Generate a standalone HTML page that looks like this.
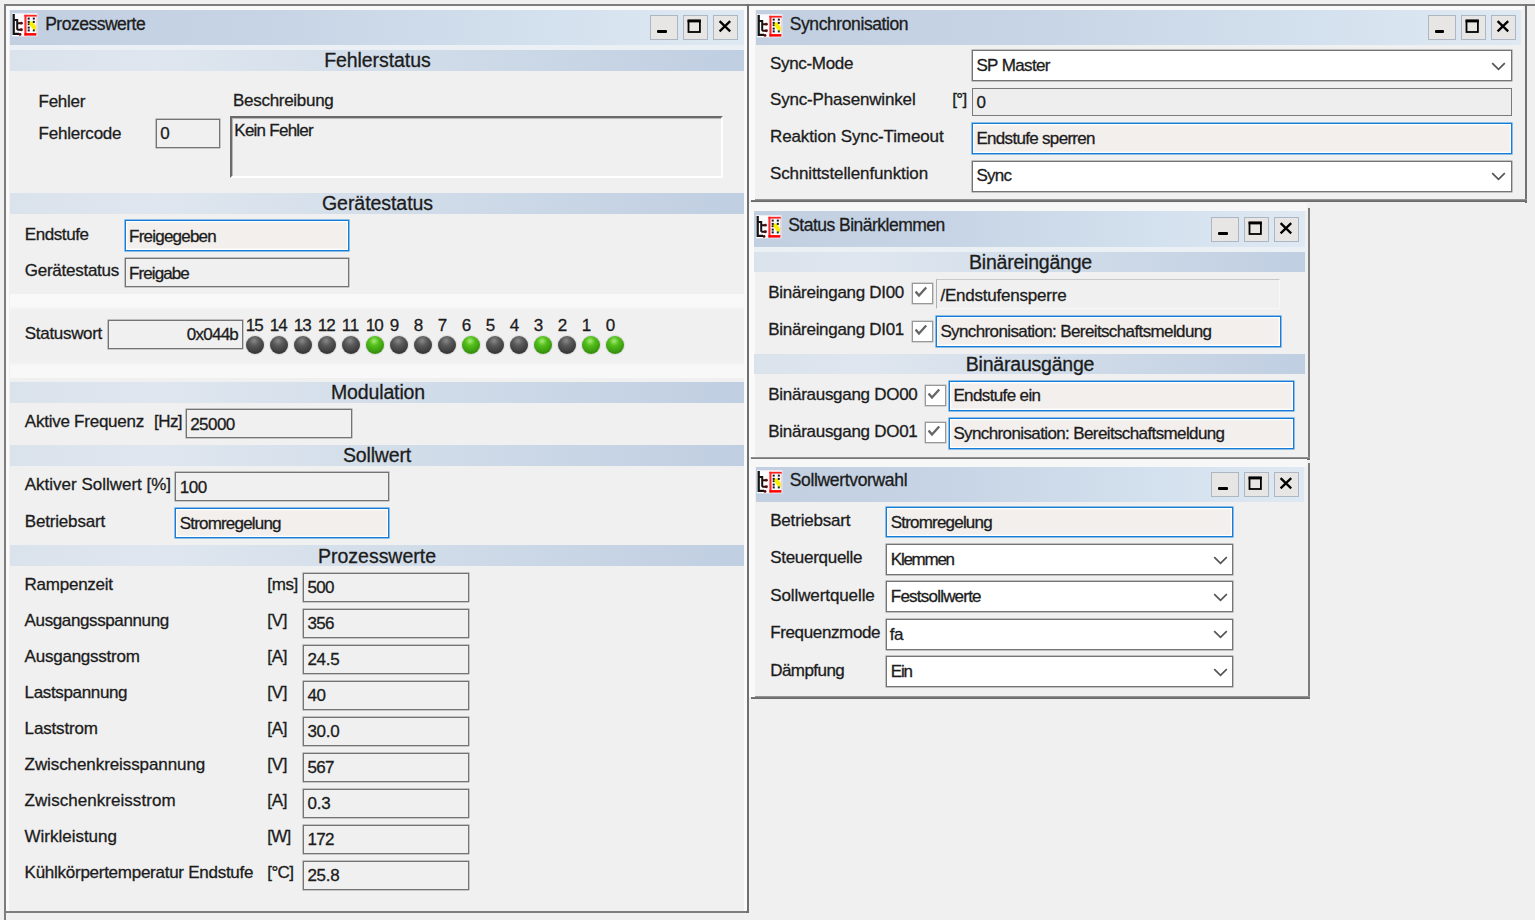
<!DOCTYPE html>
<html lang="de"><head><meta charset="utf-8"><title>Prozesswerte</title>
<style>
html,body{margin:0;padding:0}
body{width:1535px;height:920px;overflow:hidden;background:#f0f0f0;position:relative;font-family:"Liberation Sans",sans-serif;color:#1c1c1c}
body>div,body>span,body>svg{position:absolute}
.t{white-space:nowrap;display:block;-webkit-text-stroke:.3px #1c1c1c}
.ic{display:block}
</style></head><body>
<div style="left:4px;top:4px;width:1531px;height:2.2px;background:#7d7d7d"></div>
<div style="left:3.7px;top:4px;width:2.8px;height:916px;background:#7d7d7d"></div>
<div style="left:4px;top:910.7px;width:745px;height:2.8px;background:#7d7d7d"></div>
<div style="left:746.2px;top:4px;width:2.8px;height:909px;background:#707070"></div>
<div style="left:1524.8px;top:4px;width:2.2px;height:198.5px;background:#737373"></div>
<div style="left:751px;top:199.2px;width:775.8px;height:3.3px;background:linear-gradient(180deg,#a2a2a2,#777 45%,#666)"></div>
<div style="left:1307.8px;top:208.4px;width:2.3px;height:251px;background:#7d7d7d"></div>
<div style="left:751px;top:456.5px;width:559.2px;height:3.3px;background:linear-gradient(180deg,#a2a2a2,#777 45%,#666)"></div>
<div style="left:1307.8px;top:463px;width:2.3px;height:236px;background:#7d7d7d"></div>
<div style="left:751px;top:695.6px;width:559.2px;height:3.2px;background:linear-gradient(180deg,#a2a2a2,#777 45%,#666)"></div>
<div style="left:6.2px;top:6.2px;width:3px;height:905px;background:#fafafa"></div>
<div style="left:6.2px;top:6.2px;width:740px;height:3.5px;background:#fafafa"></div>
<div style="left:743.6px;top:6.2px;width:3.2px;height:905px;background:#fafafa"></div>
<div style="left:749px;top:6.2px;width:6px;height:194px;background:#fafafa"></div>
<div style="left:749px;top:6.2px;width:774px;height:3.5px;background:#fafafa"></div>
<div style="left:749px;top:202.6px;width:6px;height:254px;background:#fafafa"></div>
<div style="left:749px;top:202.6px;width:558px;height:8px;background:#f7f7f7"></div>
<div style="left:749px;top:458.7px;width:6px;height:238px;background:#fafafa"></div>
<div style="left:749px;top:458.7px;width:558px;height:8px;background:#f7f7f7"></div>
<div style="left:10.3px;top:10.2px;width:733.3px;height:34.5px;background:linear-gradient(90deg,#c1cfe1 0%,#c6d4e5 35%,#d4e1ee 75%,#dfe9f3 100%)"></div>
<svg class="ic" style="left:11.8px;top:13.2px" width="26" height="24" viewBox="0 0 26 24"><rect x="0" y="0.3" width="25.3" height="23" fill="#fbfbfd"/><path d="M1.7 0.9V20.8H7" fill="none" stroke="#141414" stroke-width="2.3"/><path d="M1.7 6.9H5.2M5.2 6V16.7M5.2 10.2H9.3M5.2 16.7H9.3" fill="none" stroke="#1a1212" stroke-width="2"/><g fill="#5c0808"><circle cx="9.4" cy="10.2" r="1.4"/><circle cx="9.4" cy="16.8" r="1.45"/><circle cx="8" cy="21.4" r="1.45"/></g><rect x="12.4" y="1.8" width="2.1" height="20.6" fill="#ff2a2a"/><rect x="12.4" y="1.8" width="12.4" height="1.8" fill="#f22"/><rect x="12.4" y="20.1" width="12" height="2.5" fill="#f00"/><rect x="23.9" y="3" width="0.9" height="17.5" fill="#f66" opacity=".35"/><path d="M17.1 8.4H20.5L24 13.6 23.7 17.3 20.5 15.7 17.3 11.6z" fill="#f6f000"/><g fill="#16161e"><rect x="15.7" y="4.6" width="2" height="2"/><rect x="20.8" y="4.6" width="2" height="2"/><rect x="15.7" y="7.9" width="2" height="2"/><rect x="20.8" y="7.9" width="2" height="2"/><rect x="15.7" y="10.3" width="1.8" height="1.8"/><rect x="15.7" y="13.6" width="2" height="2"/><rect x="15.7" y="16.4" width="2" height="2"/><rect x="20.8" y="16.4" width="2" height="2" fill="#0c3a0c"/></g></svg>
<span class="t" style="top:12.74px;font-size:17.5px;line-height:23px;letter-spacing:-0.501px;left:45.2px;">Prozesswerte</span>
<div style="left:650px;top:15px;width:28px;height:25px;background:#e7e6e5;border:1px solid #adb6c3;box-sizing:border-box;"></div>
<div style="left:683px;top:15px;width:25px;height:25px;background:#e7e6e5;border:1px solid #adb6c3;box-sizing:border-box;"></div>
<div style="left:713px;top:15px;width:25px;height:25px;background:#e7e6e5;border:1px solid #adb6c3;box-sizing:border-box;"></div>
<div style="left:657px;top:29.8px;width:9.8px;height:3.2px;background:#000;border-radius:1px"></div>
<svg class="ic" style="left:687px;top:19px" width="15" height="15" viewBox="0 0 15 15"><rect x="1.5" y="1.6" width="11.4" height="11.4" fill="none" stroke="#000" stroke-width="1.8"/><rect x="0.6" y="0.6" width="13.2" height="2.8" fill="#000"/></svg>
<svg class="ic" style="left:718px;top:20px" width="14" height="13" viewBox="0 0 14 13"><path d="M1.6 1.2l10.6 10.2M12.2 1.2L1.6 11.4" stroke="#000" stroke-width="2.3" fill="none"/></svg>
<div style="left:10px;top:44.6px;width:733.6px;height:5.4px;background:#ebf0f5"></div>
<div style="left:10px;top:49.8px;width:733.6px;height:20.8px;background:linear-gradient(90deg,#dae2ec 0%,#dfe6ef 20%,#d3deea 50%,#bfcee1 100%)"></div>
<span class="t" style="top:48.34px;font-size:19.5px;line-height:25px;letter-spacing:-0.066px;left:324.15px;">Fehlerstatus</span>
<span class="t" style="top:91.16px;font-size:17px;line-height:22px;letter-spacing:-0.281px;left:38.6px;">Fehler</span>
<span class="t" style="top:90.41px;font-size:17px;line-height:22px;letter-spacing:-0.288px;left:233px;">Beschreibung</span>
<span class="t" style="top:123.11px;font-size:17px;line-height:22px;letter-spacing:-0.235px;left:38.6px;">Fehlercode</span>
<div style="left:155.8px;top:118.7px;width:64.2px;height:29.5px;background:#f0f0f0;border:1px solid #747474;box-shadow:0 0 0 .5px #8e8e8e,1px 1px 1px #fff;box-sizing:border-box;"></div>
<span class="t" style="top:122.51px;font-size:17px;line-height:22px;left:160.2px;">0</span>
<div style="left:229.6px;top:116px;width:493.4px;height:62.2px;background:#f0f0f0;border:2px solid #fff;border-top-color:#6a6a6a;border-left-color:#6a6a6a;box-shadow:inset 1px 1px 0 #b8b8b8;box-sizing:border-box;"></div>
<span class="t" style="top:120.11px;font-size:17px;line-height:22px;letter-spacing:-0.749px;left:234.3px;">Kein Fehler</span>
<div style="left:10px;top:192.8px;width:733.6px;height:20.8px;background:linear-gradient(90deg,#dae2ec 0%,#dfe6ef 20%,#d3deea 50%,#bfcee1 100%)"></div>
<span class="t" style="top:191.34px;font-size:19.5px;line-height:25px;letter-spacing:-0.053px;left:322.00px;">Gerätestatus</span>
<span class="t" style="top:224.21px;font-size:17px;line-height:22px;letter-spacing:-0.425px;left:24.8px;">Endstufe</span>
<div style="left:124.7px;top:220.4px;width:224.3px;height:30.8px;background:#f3efed;border:1px solid #157dd8;box-shadow:0 0 0 .6px #4a9ae0,inset 0 0 0 1.3px #fff;box-sizing:border-box;"></div>
<span class="t" style="top:225.51px;font-size:17px;line-height:22px;letter-spacing:-0.787px;left:129.1px;">Freigegeben</span>
<span class="t" style="top:260.21px;font-size:17px;line-height:22px;letter-spacing:-0.261px;left:24.8px;">Gerätestatus</span>
<div style="left:124.7px;top:257.8px;width:224.3px;height:29.2px;background:#f0f0f0;border:1px solid #747474;box-shadow:0 0 0 .5px #8e8e8e,1px 1px 1px #fff;box-sizing:border-box;"></div>
<span class="t" style="top:262.81px;font-size:17px;line-height:22px;letter-spacing:-0.912px;left:129.1px;">Freigabe</span>
<div style="left:10px;top:294px;width:733.6px;height:84px;background:linear-gradient(180deg,#f9f9f9 0,#f9f9f9 12px,#f0f0f0 16px,#f0f0f0 68px,#f8f8f8 72px,#f8f8f8 84px)"></div>
<span class="t" style="top:322.61px;font-size:17px;line-height:22px;letter-spacing:-0.311px;left:24.8px;">Statuswort</span>
<div style="left:108.3px;top:319.6px;width:134.9px;height:29.2px;background:#f0f0f0;border:1px solid #747474;box-shadow:0 0 0 .5px #8e8e8e,1px 1px 1px #fff;box-sizing:border-box;"></div>
<span class="t" style="top:323.71px;font-size:17px;line-height:22px;letter-spacing:-0.762px;right:1296.96px;">0x044b</span>
<span class="t" style="top:315.01px;font-size:17px;line-height:22px;left:605.8px;">0</span>
<div style="left:605.7px;top:335.6px;width:18.8px;height:18.8px;border-radius:50%;background:radial-gradient(circle at 45% 28%,#a5ea78 0,#55c01c 28%,#3c9d10 62%,#2a7a08 100%);box-shadow:0 0 1.5px rgba(0,0,0,.4)"></div>
<span class="t" style="top:315.01px;font-size:17px;line-height:22px;left:581.8px;">1</span>
<div style="left:581.7px;top:335.6px;width:18.8px;height:18.8px;border-radius:50%;background:radial-gradient(circle at 45% 28%,#a5ea78 0,#55c01c 28%,#3c9d10 62%,#2a7a08 100%);box-shadow:0 0 1.5px rgba(0,0,0,.4)"></div>
<span class="t" style="top:315.01px;font-size:17px;line-height:22px;left:557.8px;">2</span>
<div style="left:557.7px;top:335.6px;width:18.8px;height:18.8px;border-radius:50%;background:radial-gradient(circle at 45% 26%,#888 0,#585858 32%,#3c3c3c 68%,#2a2a2a 100%);box-shadow:0 0 1.5px rgba(0,0,0,.4)"></div>
<span class="t" style="top:315.01px;font-size:17px;line-height:22px;left:533.8px;">3</span>
<div style="left:533.7px;top:335.6px;width:18.8px;height:18.8px;border-radius:50%;background:radial-gradient(circle at 45% 28%,#a5ea78 0,#55c01c 28%,#3c9d10 62%,#2a7a08 100%);box-shadow:0 0 1.5px rgba(0,0,0,.4)"></div>
<span class="t" style="top:315.01px;font-size:17px;line-height:22px;left:509.8px;">4</span>
<div style="left:509.7px;top:335.6px;width:18.8px;height:18.8px;border-radius:50%;background:radial-gradient(circle at 45% 26%,#888 0,#585858 32%,#3c3c3c 68%,#2a2a2a 100%);box-shadow:0 0 1.5px rgba(0,0,0,.4)"></div>
<span class="t" style="top:315.01px;font-size:17px;line-height:22px;left:485.8px;">5</span>
<div style="left:485.7px;top:335.6px;width:18.8px;height:18.8px;border-radius:50%;background:radial-gradient(circle at 45% 26%,#888 0,#585858 32%,#3c3c3c 68%,#2a2a2a 100%);box-shadow:0 0 1.5px rgba(0,0,0,.4)"></div>
<span class="t" style="top:315.01px;font-size:17px;line-height:22px;left:461.8px;">6</span>
<div style="left:461.7px;top:335.6px;width:18.8px;height:18.8px;border-radius:50%;background:radial-gradient(circle at 45% 28%,#a5ea78 0,#55c01c 28%,#3c9d10 62%,#2a7a08 100%);box-shadow:0 0 1.5px rgba(0,0,0,.4)"></div>
<span class="t" style="top:315.01px;font-size:17px;line-height:22px;left:437.8px;">7</span>
<div style="left:437.7px;top:335.6px;width:18.8px;height:18.8px;border-radius:50%;background:radial-gradient(circle at 45% 26%,#888 0,#585858 32%,#3c3c3c 68%,#2a2a2a 100%);box-shadow:0 0 1.5px rgba(0,0,0,.4)"></div>
<span class="t" style="top:315.01px;font-size:17px;line-height:22px;left:413.8px;">8</span>
<div style="left:413.7px;top:335.6px;width:18.8px;height:18.8px;border-radius:50%;background:radial-gradient(circle at 45% 26%,#888 0,#585858 32%,#3c3c3c 68%,#2a2a2a 100%);box-shadow:0 0 1.5px rgba(0,0,0,.4)"></div>
<span class="t" style="top:315.01px;font-size:17px;line-height:22px;left:389.8px;">9</span>
<div style="left:389.7px;top:335.6px;width:18.8px;height:18.8px;border-radius:50%;background:radial-gradient(circle at 45% 26%,#888 0,#585858 32%,#3c3c3c 68%,#2a2a2a 100%);box-shadow:0 0 1.5px rgba(0,0,0,.4)"></div>
<span class="t" style="top:315.01px;font-size:17px;line-height:22px;letter-spacing:-0.955px;left:365.8px;">10</span>
<div style="left:365.7px;top:335.6px;width:18.8px;height:18.8px;border-radius:50%;background:radial-gradient(circle at 45% 28%,#a5ea78 0,#55c01c 28%,#3c9d10 62%,#2a7a08 100%);box-shadow:0 0 1.5px rgba(0,0,0,.4)"></div>
<span class="t" style="top:315.01px;font-size:17px;line-height:22px;letter-spacing:-0.324px;left:341.8px;">11</span>
<div style="left:341.7px;top:335.6px;width:18.8px;height:18.8px;border-radius:50%;background:radial-gradient(circle at 45% 26%,#888 0,#585858 32%,#3c3c3c 68%,#2a2a2a 100%);box-shadow:0 0 1.5px rgba(0,0,0,.4)"></div>
<span class="t" style="top:315.01px;font-size:17px;line-height:22px;letter-spacing:-0.955px;left:317.8px;">12</span>
<div style="left:317.7px;top:335.6px;width:18.8px;height:18.8px;border-radius:50%;background:radial-gradient(circle at 45% 26%,#888 0,#585858 32%,#3c3c3c 68%,#2a2a2a 100%);box-shadow:0 0 1.5px rgba(0,0,0,.4)"></div>
<span class="t" style="top:315.01px;font-size:17px;line-height:22px;letter-spacing:-0.955px;left:293.8px;">13</span>
<div style="left:293.7px;top:335.6px;width:18.8px;height:18.8px;border-radius:50%;background:radial-gradient(circle at 45% 26%,#888 0,#585858 32%,#3c3c3c 68%,#2a2a2a 100%);box-shadow:0 0 1.5px rgba(0,0,0,.4)"></div>
<span class="t" style="top:315.01px;font-size:17px;line-height:22px;letter-spacing:-0.955px;left:269.8px;">14</span>
<div style="left:269.7px;top:335.6px;width:18.8px;height:18.8px;border-radius:50%;background:radial-gradient(circle at 45% 26%,#888 0,#585858 32%,#3c3c3c 68%,#2a2a2a 100%);box-shadow:0 0 1.5px rgba(0,0,0,.4)"></div>
<span class="t" style="top:315.01px;font-size:17px;line-height:22px;letter-spacing:-0.955px;left:245.8px;">15</span>
<div style="left:245.7px;top:335.6px;width:18.8px;height:18.8px;border-radius:50%;background:radial-gradient(circle at 45% 26%,#888 0,#585858 32%,#3c3c3c 68%,#2a2a2a 100%);box-shadow:0 0 1.5px rgba(0,0,0,.4)"></div>
<div style="left:10px;top:381.9px;width:733.6px;height:20.8px;background:linear-gradient(90deg,#dae2ec 0%,#dfe6ef 20%,#d3deea 50%,#bfcee1 100%)"></div>
<span class="t" style="top:380.44px;font-size:19.5px;line-height:25px;letter-spacing:-0.140px;left:331.00px;">Modulation</span>
<span class="t" style="top:411.21px;font-size:17px;line-height:22px;letter-spacing:-0.242px;left:24.8px;">Aktive Frequenz</span>
<span class="t" style="top:411.21px;font-size:17px;line-height:22px;letter-spacing:-0.556px;left:154px;">[Hz]</span>
<div style="left:185.8px;top:409px;width:165.9px;height:29.4px;background:#f0f0f0;border:1px solid #747474;box-shadow:0 0 0 .5px #8e8e8e,1px 1px 1px #fff;box-sizing:border-box;"></div>
<span class="t" style="top:413.71px;font-size:17px;line-height:22px;letter-spacing:-0.555px;left:190.2px;">25000</span>
<div style="left:10px;top:444.9px;width:733.6px;height:20.8px;background:linear-gradient(90deg,#dae2ec 0%,#dfe6ef 20%,#d3deea 50%,#bfcee1 100%)"></div>
<span class="t" style="top:443.44px;font-size:19.5px;line-height:25px;letter-spacing:-0.169px;left:343.00px;">Sollwert</span>
<span class="t" style="top:474.21px;font-size:17px;line-height:22px;letter-spacing:-0.011px;left:24.8px;">Aktiver Sollwert [%]</span>
<div style="left:175.3px;top:472.3px;width:214px;height:28.9px;background:#f0f0f0;border:1px solid #747474;box-shadow:0 0 0 .5px #8e8e8e,1px 1px 1px #fff;box-sizing:border-box;"></div>
<span class="t" style="top:476.91px;font-size:17px;line-height:22px;letter-spacing:-0.455px;left:179.7px;">100</span>
<span class="t" style="top:511.21px;font-size:17px;line-height:22px;letter-spacing:-0.182px;left:24.8px;">Betriebsart</span>
<div style="left:175.3px;top:507.8px;width:214px;height:30.5px;background:#f3efed;border:1px solid #157dd8;box-shadow:0 0 0 .6px #4a9ae0,inset 0 0 0 1.3px #fff;box-sizing:border-box;"></div>
<span class="t" style="top:513.21px;font-size:17px;line-height:22px;letter-spacing:-0.808px;left:179.7px;">Stromregelung</span>
<div style="left:10px;top:545.3px;width:733.6px;height:20.8px;background:linear-gradient(90deg,#dae2ec 0%,#dfe6ef 20%,#d3deea 50%,#bfcee1 100%)"></div>
<span class="t" style="top:543.84px;font-size:19.5px;line-height:25px;letter-spacing:-0.010px;left:318.00px;">Prozesswerte</span>
<span class="t" style="top:574.21px;font-size:17px;line-height:22px;letter-spacing:-0.251px;left:24.6px;">Rampenzeit</span>
<span class="t" style="top:574.21px;font-size:17px;line-height:22px;letter-spacing:-0.377px;left:267.3px;">[ms]</span>
<div style="left:303px;top:572.5px;width:166px;height:29.2px;background:#f0f0f0;border:1px solid #747474;box-shadow:0 0 0 .5px #8e8e8e,1px 1px 1px #fff;box-sizing:border-box;"></div>
<span class="t" style="top:576.91px;font-size:17px;line-height:22px;letter-spacing:-0.588px;left:307.4px;">500</span>
<span class="t" style="top:610.21px;font-size:17px;line-height:22px;letter-spacing:-0.381px;left:24.6px;">Ausgangsspannung</span>
<span class="t" style="top:610.21px;font-size:17px;line-height:22px;letter-spacing:-0.262px;left:267.3px;">[V]</span>
<div style="left:303px;top:608.5px;width:166px;height:29.2px;background:#f0f0f0;border:1px solid #747474;box-shadow:0 0 0 .5px #8e8e8e,1px 1px 1px #fff;box-sizing:border-box;"></div>
<span class="t" style="top:612.91px;font-size:17px;line-height:22px;letter-spacing:-0.588px;left:307.4px;">356</span>
<span class="t" style="top:646.21px;font-size:17px;line-height:22px;letter-spacing:-0.232px;left:24.6px;">Ausgangsstrom</span>
<span class="t" style="top:646.21px;font-size:17px;line-height:22px;letter-spacing:-0.262px;left:267.3px;">[A]</span>
<div style="left:303px;top:644.5px;width:166px;height:29.2px;background:#f0f0f0;border:1px solid #747474;box-shadow:0 0 0 .5px #8e8e8e,1px 1px 1px #fff;box-sizing:border-box;"></div>
<span class="t" style="top:648.91px;font-size:17px;line-height:22px;letter-spacing:-0.297px;left:307.4px;">24.5</span>
<span class="t" style="top:682.21px;font-size:17px;line-height:22px;letter-spacing:-0.351px;left:24.6px;">Lastspannung</span>
<span class="t" style="top:682.21px;font-size:17px;line-height:22px;letter-spacing:-0.262px;left:267.3px;">[V]</span>
<div style="left:303px;top:680.5px;width:166px;height:29.2px;background:#f0f0f0;border:1px solid #747474;box-shadow:0 0 0 .5px #8e8e8e,1px 1px 1px #fff;box-sizing:border-box;"></div>
<span class="t" style="top:684.91px;font-size:17px;line-height:22px;letter-spacing:-0.455px;left:307.4px;">40</span>
<span class="t" style="top:718.21px;font-size:17px;line-height:22px;letter-spacing:-0.170px;left:24.6px;">Laststrom</span>
<span class="t" style="top:718.21px;font-size:17px;line-height:22px;letter-spacing:-0.262px;left:267.3px;">[A]</span>
<div style="left:303px;top:716.5px;width:166px;height:29.2px;background:#f0f0f0;border:1px solid #747474;box-shadow:0 0 0 .5px #8e8e8e,1px 1px 1px #fff;box-sizing:border-box;"></div>
<span class="t" style="top:720.91px;font-size:17px;line-height:22px;letter-spacing:-0.297px;left:307.4px;">30.0</span>
<span class="t" style="top:754.21px;font-size:17px;line-height:22px;letter-spacing:-0.085px;left:24.6px;">Zwischenkreisspannung</span>
<span class="t" style="top:754.21px;font-size:17px;line-height:22px;letter-spacing:-0.262px;left:267.3px;">[V]</span>
<div style="left:303px;top:752.5px;width:166px;height:29.2px;background:#f0f0f0;border:1px solid #747474;box-shadow:0 0 0 .5px #8e8e8e,1px 1px 1px #fff;box-sizing:border-box;"></div>
<span class="t" style="top:756.91px;font-size:17px;line-height:22px;letter-spacing:-0.588px;left:307.4px;">567</span>
<span class="t" style="top:790.21px;font-size:17px;line-height:22px;letter-spacing:0.045px;left:24.6px;">Zwischenkreisstrom</span>
<span class="t" style="top:790.21px;font-size:17px;line-height:22px;letter-spacing:-0.262px;left:267.3px;">[A]</span>
<div style="left:303px;top:788.5px;width:166px;height:29.2px;background:#f0f0f0;border:1px solid #747474;box-shadow:0 0 0 .5px #8e8e8e,1px 1px 1px #fff;box-sizing:border-box;"></div>
<span class="t" style="top:792.91px;font-size:17px;line-height:22px;letter-spacing:-0.211px;left:307.4px;">0.3</span>
<span class="t" style="top:826.21px;font-size:17px;line-height:22px;letter-spacing:-0.023px;left:24.6px;">Wirkleistung</span>
<span class="t" style="top:826.21px;font-size:17px;line-height:22px;letter-spacing:-0.830px;left:267.3px;">[W]</span>
<div style="left:303px;top:824.5px;width:166px;height:29.2px;background:#f0f0f0;border:1px solid #747474;box-shadow:0 0 0 .5px #8e8e8e,1px 1px 1px #fff;box-sizing:border-box;"></div>
<span class="t" style="top:828.91px;font-size:17px;line-height:22px;letter-spacing:-0.588px;left:307.4px;">172</span>
<span class="t" style="top:862.21px;font-size:17px;line-height:22px;letter-spacing:-0.264px;left:24.6px;">Kühlkörpertemperatur Endstufe</span>
<span class="t" style="top:862.21px;font-size:17px;line-height:22px;letter-spacing:-0.630px;left:267.3px;">[°C]</span>
<div style="left:303px;top:860.5px;width:166px;height:29.2px;background:#f0f0f0;border:1px solid #747474;box-shadow:0 0 0 .5px #8e8e8e,1px 1px 1px #fff;box-sizing:border-box;"></div>
<span class="t" style="top:864.91px;font-size:17px;line-height:22px;letter-spacing:-0.297px;left:307.4px;">25.8</span>
<div style="left:756.3px;top:10.2px;width:764.3px;height:34.6px;background:linear-gradient(90deg,#c1cfe1 0%,#c6d4e5 35%,#d4e1ee 75%,#dfe9f3 100%)"></div>
<svg class="ic" style="left:757.3px;top:13.5px" width="26" height="24" viewBox="0 0 26 24"><rect x="0" y="0.3" width="25.3" height="23" fill="#fbfbfd"/><path d="M1.7 0.9V20.8H7" fill="none" stroke="#141414" stroke-width="2.3"/><path d="M1.7 6.9H5.2M5.2 6V16.7M5.2 10.2H9.3M5.2 16.7H9.3" fill="none" stroke="#1a1212" stroke-width="2"/><g fill="#5c0808"><circle cx="9.4" cy="10.2" r="1.4"/><circle cx="9.4" cy="16.8" r="1.45"/><circle cx="8" cy="21.4" r="1.45"/></g><rect x="12.4" y="1.8" width="2.1" height="20.6" fill="#ff2a2a"/><rect x="12.4" y="1.8" width="12.4" height="1.8" fill="#f22"/><rect x="12.4" y="20.1" width="12" height="2.5" fill="#f00"/><rect x="23.9" y="3" width="0.9" height="17.5" fill="#f66" opacity=".35"/><path d="M17.1 8.4H20.5L24 13.6 23.7 17.3 20.5 15.7 17.3 11.6z" fill="#f6f000"/><g fill="#16161e"><rect x="15.7" y="4.6" width="2" height="2"/><rect x="20.8" y="4.6" width="2" height="2"/><rect x="15.7" y="7.9" width="2" height="2"/><rect x="20.8" y="7.9" width="2" height="2"/><rect x="15.7" y="10.3" width="1.8" height="1.8"/><rect x="15.7" y="13.6" width="2" height="2"/><rect x="15.7" y="16.4" width="2" height="2"/><rect x="20.8" y="16.4" width="2" height="2" fill="#0c3a0c"/></g></svg>
<span class="t" style="top:12.54px;font-size:17.5px;line-height:23px;letter-spacing:-0.401px;left:789.7px;">Synchronisation</span>
<div style="left:1427.7px;top:15px;width:28px;height:25px;background:#e7e6e5;border:1px solid #adb6c3;box-sizing:border-box;"></div>
<div style="left:1460.7px;top:15px;width:25px;height:25px;background:#e7e6e5;border:1px solid #adb6c3;box-sizing:border-box;"></div>
<div style="left:1490.7px;top:15px;width:25px;height:25px;background:#e7e6e5;border:1px solid #adb6c3;box-sizing:border-box;"></div>
<div style="left:1434.7px;top:29.8px;width:9.8px;height:3.2px;background:#000;border-radius:1px"></div>
<svg class="ic" style="left:1464.7px;top:19px" width="15" height="15" viewBox="0 0 15 15"><rect x="1.5" y="1.6" width="11.4" height="11.4" fill="none" stroke="#000" stroke-width="1.8"/><rect x="0.6" y="0.6" width="13.2" height="2.8" fill="#000"/></svg>
<svg class="ic" style="left:1495.7px;top:20px" width="14" height="13" viewBox="0 0 14 13"><path d="M1.6 1.2l10.6 10.2M12.2 1.2L1.6 11.4" stroke="#000" stroke-width="2.3" fill="none"/></svg>
<span class="t" style="top:53.21px;font-size:17px;line-height:22px;letter-spacing:-0.331px;left:770px;">Sync-Mode</span>
<div style="left:972px;top:50px;width:540px;height:30.7px;background:#fff;border:1px solid #747474;box-shadow:0 0 0 .5px #8e8e8e;box-sizing:border-box;"></div>
<span class="t" style="top:54.51px;font-size:17px;line-height:22px;letter-spacing:-0.617px;left:976.4px;">SP Master</span>
<svg class="ic" style="left:1491px;top:61.5px" width="15" height="9" viewBox="0 0 15 9"><path d="M1.2 1.2l6.3 6.2 6.3-6.2" stroke="#555" stroke-width="1.7" fill="none"/></svg>
<span class="t" style="top:89.21px;font-size:17px;line-height:22px;letter-spacing:-0.168px;left:770px;">Sync-Phasenwinkel</span>
<span class="t" style="top:89.21px;font-size:17px;line-height:22px;letter-spacing:-0.648px;left:952.3px;">[°]</span>
<div style="left:972px;top:87.8px;width:540px;height:28.6px;background:#eeeeee;border:1px solid #7a7a7a;box-sizing:border-box;"></div>
<span class="t" style="top:91.51px;font-size:17px;line-height:22px;left:976.4px;">0</span>
<span class="t" style="top:126.21px;font-size:17px;line-height:22px;letter-spacing:-0.122px;left:770px;">Reaktion Sync-Timeout</span>
<div style="left:972px;top:123.1px;width:540px;height:31.1px;background:#f3efed;border:1px solid #157dd8;box-shadow:0 0 0 .6px #4a9ae0,inset 0 0 0 1.3px #fff;box-sizing:border-box;"></div>
<span class="t" style="top:128.01px;font-size:17px;line-height:22px;letter-spacing:-0.686px;left:976.4px;">Endstufe sperren</span>
<span class="t" style="top:163.41px;font-size:17px;line-height:22px;letter-spacing:-0.121px;left:770px;">Schnittstellenfunktion</span>
<div style="left:972px;top:161px;width:540px;height:30.7px;background:#fff;border:1px solid #747474;box-shadow:0 0 0 .5px #8e8e8e;box-sizing:border-box;"></div>
<span class="t" style="top:165.21px;font-size:17px;line-height:22px;letter-spacing:-0.698px;left:976.4px;">Sync</span>
<svg class="ic" style="left:1491px;top:172.2px" width="15" height="9" viewBox="0 0 15 9"><path d="M1.2 1.2l6.3 6.2 6.3-6.2" stroke="#555" stroke-width="1.7" fill="none"/></svg>
<div style="left:754.2px;top:211.4px;width:550.6px;height:35.4px;background:linear-gradient(90deg,#c1cfe1 0%,#c6d4e5 35%,#d4e1ee 75%,#dfe9f3 100%)"></div>
<svg class="ic" style="left:755.7px;top:215.3px" width="26" height="24" viewBox="0 0 26 24"><rect x="0" y="0.3" width="25.3" height="23" fill="#fbfbfd"/><path d="M1.7 0.9V20.8H7" fill="none" stroke="#141414" stroke-width="2.3"/><path d="M1.7 6.9H5.2M5.2 6V16.7M5.2 10.2H9.3M5.2 16.7H9.3" fill="none" stroke="#1a1212" stroke-width="2"/><g fill="#5c0808"><circle cx="9.4" cy="10.2" r="1.4"/><circle cx="9.4" cy="16.8" r="1.45"/><circle cx="8" cy="21.4" r="1.45"/></g><rect x="12.4" y="1.8" width="2.1" height="20.6" fill="#ff2a2a"/><rect x="12.4" y="1.8" width="12.4" height="1.8" fill="#f22"/><rect x="12.4" y="20.1" width="12" height="2.5" fill="#f00"/><rect x="23.9" y="3" width="0.9" height="17.5" fill="#f66" opacity=".35"/><path d="M17.1 8.4H20.5L24 13.6 23.7 17.3 20.5 15.7 17.3 11.6z" fill="#f6f000"/><g fill="#16161e"><rect x="15.7" y="4.6" width="2" height="2"/><rect x="20.8" y="4.6" width="2" height="2"/><rect x="15.7" y="7.9" width="2" height="2"/><rect x="20.8" y="7.9" width="2" height="2"/><rect x="15.7" y="10.3" width="1.8" height="1.8"/><rect x="15.7" y="13.6" width="2" height="2"/><rect x="15.7" y="16.4" width="2" height="2"/><rect x="20.8" y="16.4" width="2" height="2" fill="#0c3a0c"/></g></svg>
<span class="t" style="top:214.44px;font-size:17.5px;line-height:23px;letter-spacing:-0.517px;left:788.2px;">Status Binärklemmen</span>
<div style="left:1211px;top:217px;width:28px;height:25px;background:#e7e6e5;border:1px solid #adb6c3;box-sizing:border-box;"></div>
<div style="left:1244px;top:217px;width:25px;height:25px;background:#e7e6e5;border:1px solid #adb6c3;box-sizing:border-box;"></div>
<div style="left:1274px;top:217px;width:25px;height:25px;background:#e7e6e5;border:1px solid #adb6c3;box-sizing:border-box;"></div>
<div style="left:1218px;top:231.8px;width:9.8px;height:3.2px;background:#000;border-radius:1px"></div>
<svg class="ic" style="left:1248px;top:221px" width="15" height="15" viewBox="0 0 15 15"><rect x="1.5" y="1.6" width="11.4" height="11.4" fill="none" stroke="#000" stroke-width="1.8"/><rect x="0.6" y="0.6" width="13.2" height="2.8" fill="#000"/></svg>
<svg class="ic" style="left:1279px;top:222px" width="14" height="13" viewBox="0 0 14 13"><path d="M1.6 1.2l10.6 10.2M12.2 1.2L1.6 11.4" stroke="#000" stroke-width="2.3" fill="none"/></svg>
<div style="left:754.2px;top:246.8px;width:550.6px;height:5.6px;background:#ebf0f5"></div>
<div style="left:754.2px;top:252.3px;width:550.6px;height:19.7px;background:linear-gradient(90deg,#dae2ec 0%,#dfe6ef 20%,#d3deea 50%,#bfcee1 100%)"></div>
<span class="t" style="top:250.24px;font-size:19.5px;line-height:25px;letter-spacing:-0.213px;left:969.00px;">Binäreingänge</span>
<span class="t" style="top:282.11px;font-size:17px;line-height:22px;letter-spacing:-0.301px;left:768.3px;">Binäreingang DI00</span>
<div style="left:912px;top:283px;width:21px;height:21px;background:#fff;border:1px solid #999;box-shadow:0 0 0 .5px #b4b4b4;box-sizing:border-box;"></div>
<svg class="ic" style="left:915px;top:286px" width="15" height="15" viewBox="0 0 15 15"><path d="M0.6 5.6l3.4 4 7.2-8" stroke="#666" stroke-width="2.3" fill="none"/></svg>
<div style="left:936px;top:279.2px;width:344.3px;height:29.6px;background:#f0f0f0;border:1px solid #f8f8f8;border-top-color:#c8c8c8;border-left-color:#b0b0b0;box-sizing:border-box;"></div>
<span class="t" style="top:285.41px;font-size:17px;line-height:22px;letter-spacing:-0.217px;left:940.4px;">/Endstufensperre</span>
<span class="t" style="top:319.41px;font-size:17px;line-height:22px;letter-spacing:-0.301px;left:768.3px;">Binäreingang DI01</span>
<div style="left:912px;top:320.6px;width:21px;height:21px;background:#fff;border:1px solid #999;box-shadow:0 0 0 .5px #b4b4b4;box-sizing:border-box;"></div>
<svg class="ic" style="left:915px;top:323.6px" width="15" height="15" viewBox="0 0 15 15"><path d="M0.6 5.6l3.4 4 7.2-8" stroke="#666" stroke-width="2.3" fill="none"/></svg>
<div style="left:936px;top:316.2px;width:345px;height:30.8px;background:#f3efed;border:1px solid #157dd8;box-shadow:0 0 0 .6px #4a9ae0,inset 0 0 0 1.3px #fff;box-sizing:border-box;"></div>
<span class="t" style="top:321.21px;font-size:17px;line-height:22px;letter-spacing:-0.618px;left:940.4px;">Synchronisation: Bereitschaftsmeldung</span>
<div style="left:754.2px;top:354.2px;width:550.6px;height:19.7px;background:linear-gradient(90deg,#dae2ec 0%,#dfe6ef 20%,#d3deea 50%,#bfcee1 100%)"></div>
<span class="t" style="top:352.14px;font-size:19.5px;line-height:25px;letter-spacing:-0.207px;left:965.75px;">Binärausgänge</span>
<span class="t" style="top:384.21px;font-size:17px;line-height:22px;letter-spacing:-0.285px;left:768.3px;">Binärausgang DO00</span>
<div style="left:925px;top:385px;width:21px;height:21px;background:#fff;border:1px solid #999;box-shadow:0 0 0 .5px #b4b4b4;box-sizing:border-box;"></div>
<svg class="ic" style="left:928px;top:388px" width="15" height="15" viewBox="0 0 15 15"><path d="M0.6 5.6l3.4 4 7.2-8" stroke="#666" stroke-width="2.3" fill="none"/></svg>
<div style="left:949px;top:380.9px;width:345.4px;height:30.5px;background:#f3efed;border:1px solid #157dd8;box-shadow:0 0 0 .6px #4a9ae0,inset 0 0 0 1.3px #fff;box-sizing:border-box;"></div>
<span class="t" style="top:385.41px;font-size:17px;line-height:22px;letter-spacing:-0.626px;left:953.4px;">Endstufe ein</span>
<span class="t" style="top:420.91px;font-size:17px;line-height:22px;letter-spacing:-0.285px;left:768.3px;">Binärausgang DO01</span>
<div style="left:925px;top:421.8px;width:21px;height:21px;background:#fff;border:1px solid #999;box-shadow:0 0 0 .5px #b4b4b4;box-sizing:border-box;"></div>
<svg class="ic" style="left:928px;top:424.8px" width="15" height="15" viewBox="0 0 15 15"><path d="M0.6 5.6l3.4 4 7.2-8" stroke="#666" stroke-width="2.3" fill="none"/></svg>
<div style="left:949px;top:418.2px;width:345.4px;height:30.5px;background:#f3efed;border:1px solid #157dd8;box-shadow:0 0 0 .6px #4a9ae0,inset 0 0 0 1.3px #fff;box-sizing:border-box;"></div>
<span class="t" style="top:422.71px;font-size:17px;line-height:22px;letter-spacing:-0.618px;left:953.4px;">Synchronisation: Bereitschaftsmeldung</span>
<div style="left:756px;top:467px;width:548px;height:34.5px;background:linear-gradient(90deg,#c1cfe1 0%,#c6d4e5 35%,#d4e1ee 75%,#dfe9f3 100%)"></div>
<svg class="ic" style="left:757.3px;top:470.3px" width="26" height="24" viewBox="0 0 26 24"><rect x="0" y="0.3" width="25.3" height="23" fill="#fbfbfd"/><path d="M1.7 0.9V20.8H7" fill="none" stroke="#141414" stroke-width="2.3"/><path d="M1.7 6.9H5.2M5.2 6V16.7M5.2 10.2H9.3M5.2 16.7H9.3" fill="none" stroke="#1a1212" stroke-width="2"/><g fill="#5c0808"><circle cx="9.4" cy="10.2" r="1.4"/><circle cx="9.4" cy="16.8" r="1.45"/><circle cx="8" cy="21.4" r="1.45"/></g><rect x="12.4" y="1.8" width="2.1" height="20.6" fill="#ff2a2a"/><rect x="12.4" y="1.8" width="12.4" height="1.8" fill="#f22"/><rect x="12.4" y="20.1" width="12" height="2.5" fill="#f00"/><rect x="23.9" y="3" width="0.9" height="17.5" fill="#f66" opacity=".35"/><path d="M17.1 8.4H20.5L24 13.6 23.7 17.3 20.5 15.7 17.3 11.6z" fill="#f6f000"/><g fill="#16161e"><rect x="15.7" y="4.6" width="2" height="2"/><rect x="20.8" y="4.6" width="2" height="2"/><rect x="15.7" y="7.9" width="2" height="2"/><rect x="20.8" y="7.9" width="2" height="2"/><rect x="15.7" y="10.3" width="1.8" height="1.8"/><rect x="15.7" y="13.6" width="2" height="2"/><rect x="15.7" y="16.4" width="2" height="2"/><rect x="20.8" y="16.4" width="2" height="2" fill="#0c3a0c"/></g></svg>
<span class="t" style="top:468.84px;font-size:17.5px;line-height:23px;letter-spacing:-0.336px;left:789.7px;">Sollwertvorwahl</span>
<div style="left:1211px;top:472px;width:28px;height:25px;background:#e7e6e5;border:1px solid #adb6c3;box-sizing:border-box;"></div>
<div style="left:1244px;top:472px;width:25px;height:25px;background:#e7e6e5;border:1px solid #adb6c3;box-sizing:border-box;"></div>
<div style="left:1274px;top:472px;width:25px;height:25px;background:#e7e6e5;border:1px solid #adb6c3;box-sizing:border-box;"></div>
<div style="left:1218px;top:486.8px;width:9.8px;height:3.2px;background:#000;border-radius:1px"></div>
<svg class="ic" style="left:1248px;top:476px" width="15" height="15" viewBox="0 0 15 15"><rect x="1.5" y="1.6" width="11.4" height="11.4" fill="none" stroke="#000" stroke-width="1.8"/><rect x="0.6" y="0.6" width="13.2" height="2.8" fill="#000"/></svg>
<svg class="ic" style="left:1279px;top:477px" width="14" height="13" viewBox="0 0 14 13"><path d="M1.6 1.2l10.6 10.2M12.2 1.2L1.6 11.4" stroke="#000" stroke-width="2.3" fill="none"/></svg>
<span class="t" style="top:509.91px;font-size:17px;line-height:22px;letter-spacing:-0.182px;left:770.2px;">Betriebsart</span>
<div style="left:886.4px;top:506.5px;width:346.6px;height:30.5px;background:#f3efed;border:1px solid #157dd8;box-shadow:0 0 0 .6px #4a9ae0,inset 0 0 0 1.3px #fff;box-sizing:border-box;"></div>
<span class="t" style="top:511.91px;font-size:17px;line-height:22px;letter-spacing:-0.808px;left:890.8px;">Stromregelung</span>
<span class="t" style="top:547.21px;font-size:17px;line-height:22px;letter-spacing:-0.288px;left:770.2px;">Steuerquelle</span>
<div style="left:886.4px;top:544px;width:346.6px;height:31px;background:#fff;border:1px solid #747474;box-shadow:0 0 0 .5px #8e8e8e;box-sizing:border-box;"></div>
<span class="t" style="top:548.71px;font-size:17px;line-height:22px;letter-spacing:-1.258px;left:890.8px;">Klemmen</span>
<svg class="ic" style="left:1212.8px;top:555.5px" width="15" height="9" viewBox="0 0 15 9"><path d="M1.2 1.2l6.3 6.2 6.3-6.2" stroke="#555" stroke-width="1.7" fill="none"/></svg>
<span class="t" style="top:584.66px;font-size:17px;line-height:22px;letter-spacing:-0.095px;left:770.2px;">Sollwertquelle</span>
<div style="left:886.4px;top:581.45px;width:346.6px;height:31px;background:#fff;border:1px solid #747474;box-shadow:0 0 0 .5px #8e8e8e;box-sizing:border-box;"></div>
<span class="t" style="top:586.16px;font-size:17px;line-height:22px;letter-spacing:-0.780px;left:890.8px;">Festsollwerte</span>
<svg class="ic" style="left:1212.8px;top:592.95px" width="15" height="9" viewBox="0 0 15 9"><path d="M1.2 1.2l6.3 6.2 6.3-6.2" stroke="#555" stroke-width="1.7" fill="none"/></svg>
<span class="t" style="top:622.11px;font-size:17px;line-height:22px;letter-spacing:-0.362px;left:770.2px;">Frequenzmode</span>
<div style="left:886.4px;top:618.9px;width:346.6px;height:31px;background:#fff;border:1px solid #747474;box-shadow:0 0 0 .5px #8e8e8e;box-sizing:border-box;"></div>
<span class="t" style="top:623.61px;font-size:17px;line-height:22px;letter-spacing:-0.589px;left:889.8px;">fa</span>
<svg class="ic" style="left:1212.8px;top:630.4px" width="15" height="9" viewBox="0 0 15 9"><path d="M1.2 1.2l6.3 6.2 6.3-6.2" stroke="#555" stroke-width="1.7" fill="none"/></svg>
<span class="t" style="top:659.56px;font-size:17px;line-height:22px;letter-spacing:-0.554px;left:770.2px;">Dämpfung</span>
<div style="left:886.4px;top:656.35px;width:346.6px;height:31px;background:#fff;border:1px solid #747474;box-shadow:0 0 0 .5px #8e8e8e;box-sizing:border-box;"></div>
<span class="t" style="top:661.06px;font-size:17px;line-height:22px;letter-spacing:-1.190px;left:890.8px;">Ein</span>
<svg class="ic" style="left:1212.8px;top:667.85px" width="15" height="9" viewBox="0 0 15 9"><path d="M1.2 1.2l6.3 6.2 6.3-6.2" stroke="#555" stroke-width="1.7" fill="none"/></svg>
</body></html>
